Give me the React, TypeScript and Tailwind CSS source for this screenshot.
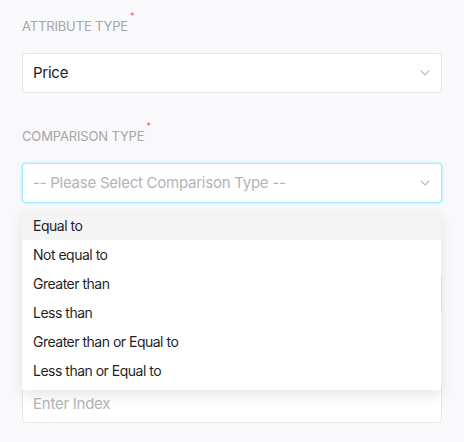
import type React from "react"

const options = [
  "Equal to",
  "Not equal to",
  "Greater than",
  "Less than",
  "Greater than or Equal to",
  "Less than or Equal to",
]

function Chevron(): React.JSX.Element {
  return (
    <svg width="10" height="6" viewBox="0 0 10 6" fill="none" className="shrink-0">
      <path d="M1 0.8L5 5L9 0.8" stroke="#b8b8b8" strokeWidth="1.1" strokeLinecap="round" strokeLinejoin="round" />
    </svg>
  )
}

function Label({ text }: { text: string }): React.JSX.Element {
  return (
    <label className="flex items-start h-5 mt-[1px] text-[13px] leading-5 uppercase text-[#a6a6a6] tracking-[-0.15px]">
      {text}
      {text && <span className="text-[#f0506e] text-[9px] leading-none ml-[2px] -mt-[5px]">*</span>}
    </label>
  )
}

export default function App(): React.JSX.Element {
  return (
    <main
      className="min-h-screen bg-[#f9f9fb] px-[22px] pt-[15px] flex flex-col gap-8"
      style={{ fontFamily: "Inter, 'Noto Sans', sans-serif" }}
    >
      <section className="flex flex-col gap-[17px]">
        <Label text="Attribute Type" />
        <div className="h-10 bg-white border border-[#e6e6e8] rounded-[4px] flex items-center justify-between pl-[10px] pr-[11px]">
          <span className="text-[15px] text-[#222] tracking-[-0.25px]">Price</span>
          <Chevron />
        </div>
      </section>

      <section className="flex flex-col gap-[17px]">
        <Label text="Comparison Type" />
        <div className="relative">
          <div className="h-10 bg-white border border-[#a9ecfb] rounded-[4px] ring-[1.5px] ring-[#cdf5fe] flex items-center justify-between pl-[10px] pr-[11px]">
            <span className="text-[15px] text-[#b4b4b6] tracking-[-0.25px]">-- Please Select Comparison Type --</span>
            <Chevron />
          </div>
          <ul className="absolute z-10 left-0 right-[1px] top-full mt-[8px] bg-white shadow-[0_6px_14px_rgba(0,0,0,0.09)] rounded-b-[2px] pb-[5px]">
            {options.map((o, i) => (
              <li
                key={o}
                className={`h-[29px] flex items-center pl-[11px] text-[14px] tracking-[-0.5px] text-[#1f1f1f] ${i === 0 ? "bg-[#f4f4f5]" : ""}`}
              >
                {o}
              </li>
            ))}
          </ul>
        </div>
      </section>

      {/* covered by the open menu */}
      <section className="flex flex-col gap-[17px]">
        <Label text="" />
        <div className="h-10 bg-white border border-[#e6e6e8] rounded-[4px]" />
      </section>

      <section className="flex flex-col gap-[17px]">
        <Label text="" />
        <div className="h-10 bg-white border border-[#e6e6e8] rounded-[4px] flex items-center pl-[10px] pt-[2px]">
          <span className="text-[15px] text-[#b4b4b6] tracking-[-0.25px]">Enter Index</span>
        </div>
      </section>
    </main>
  )
}
